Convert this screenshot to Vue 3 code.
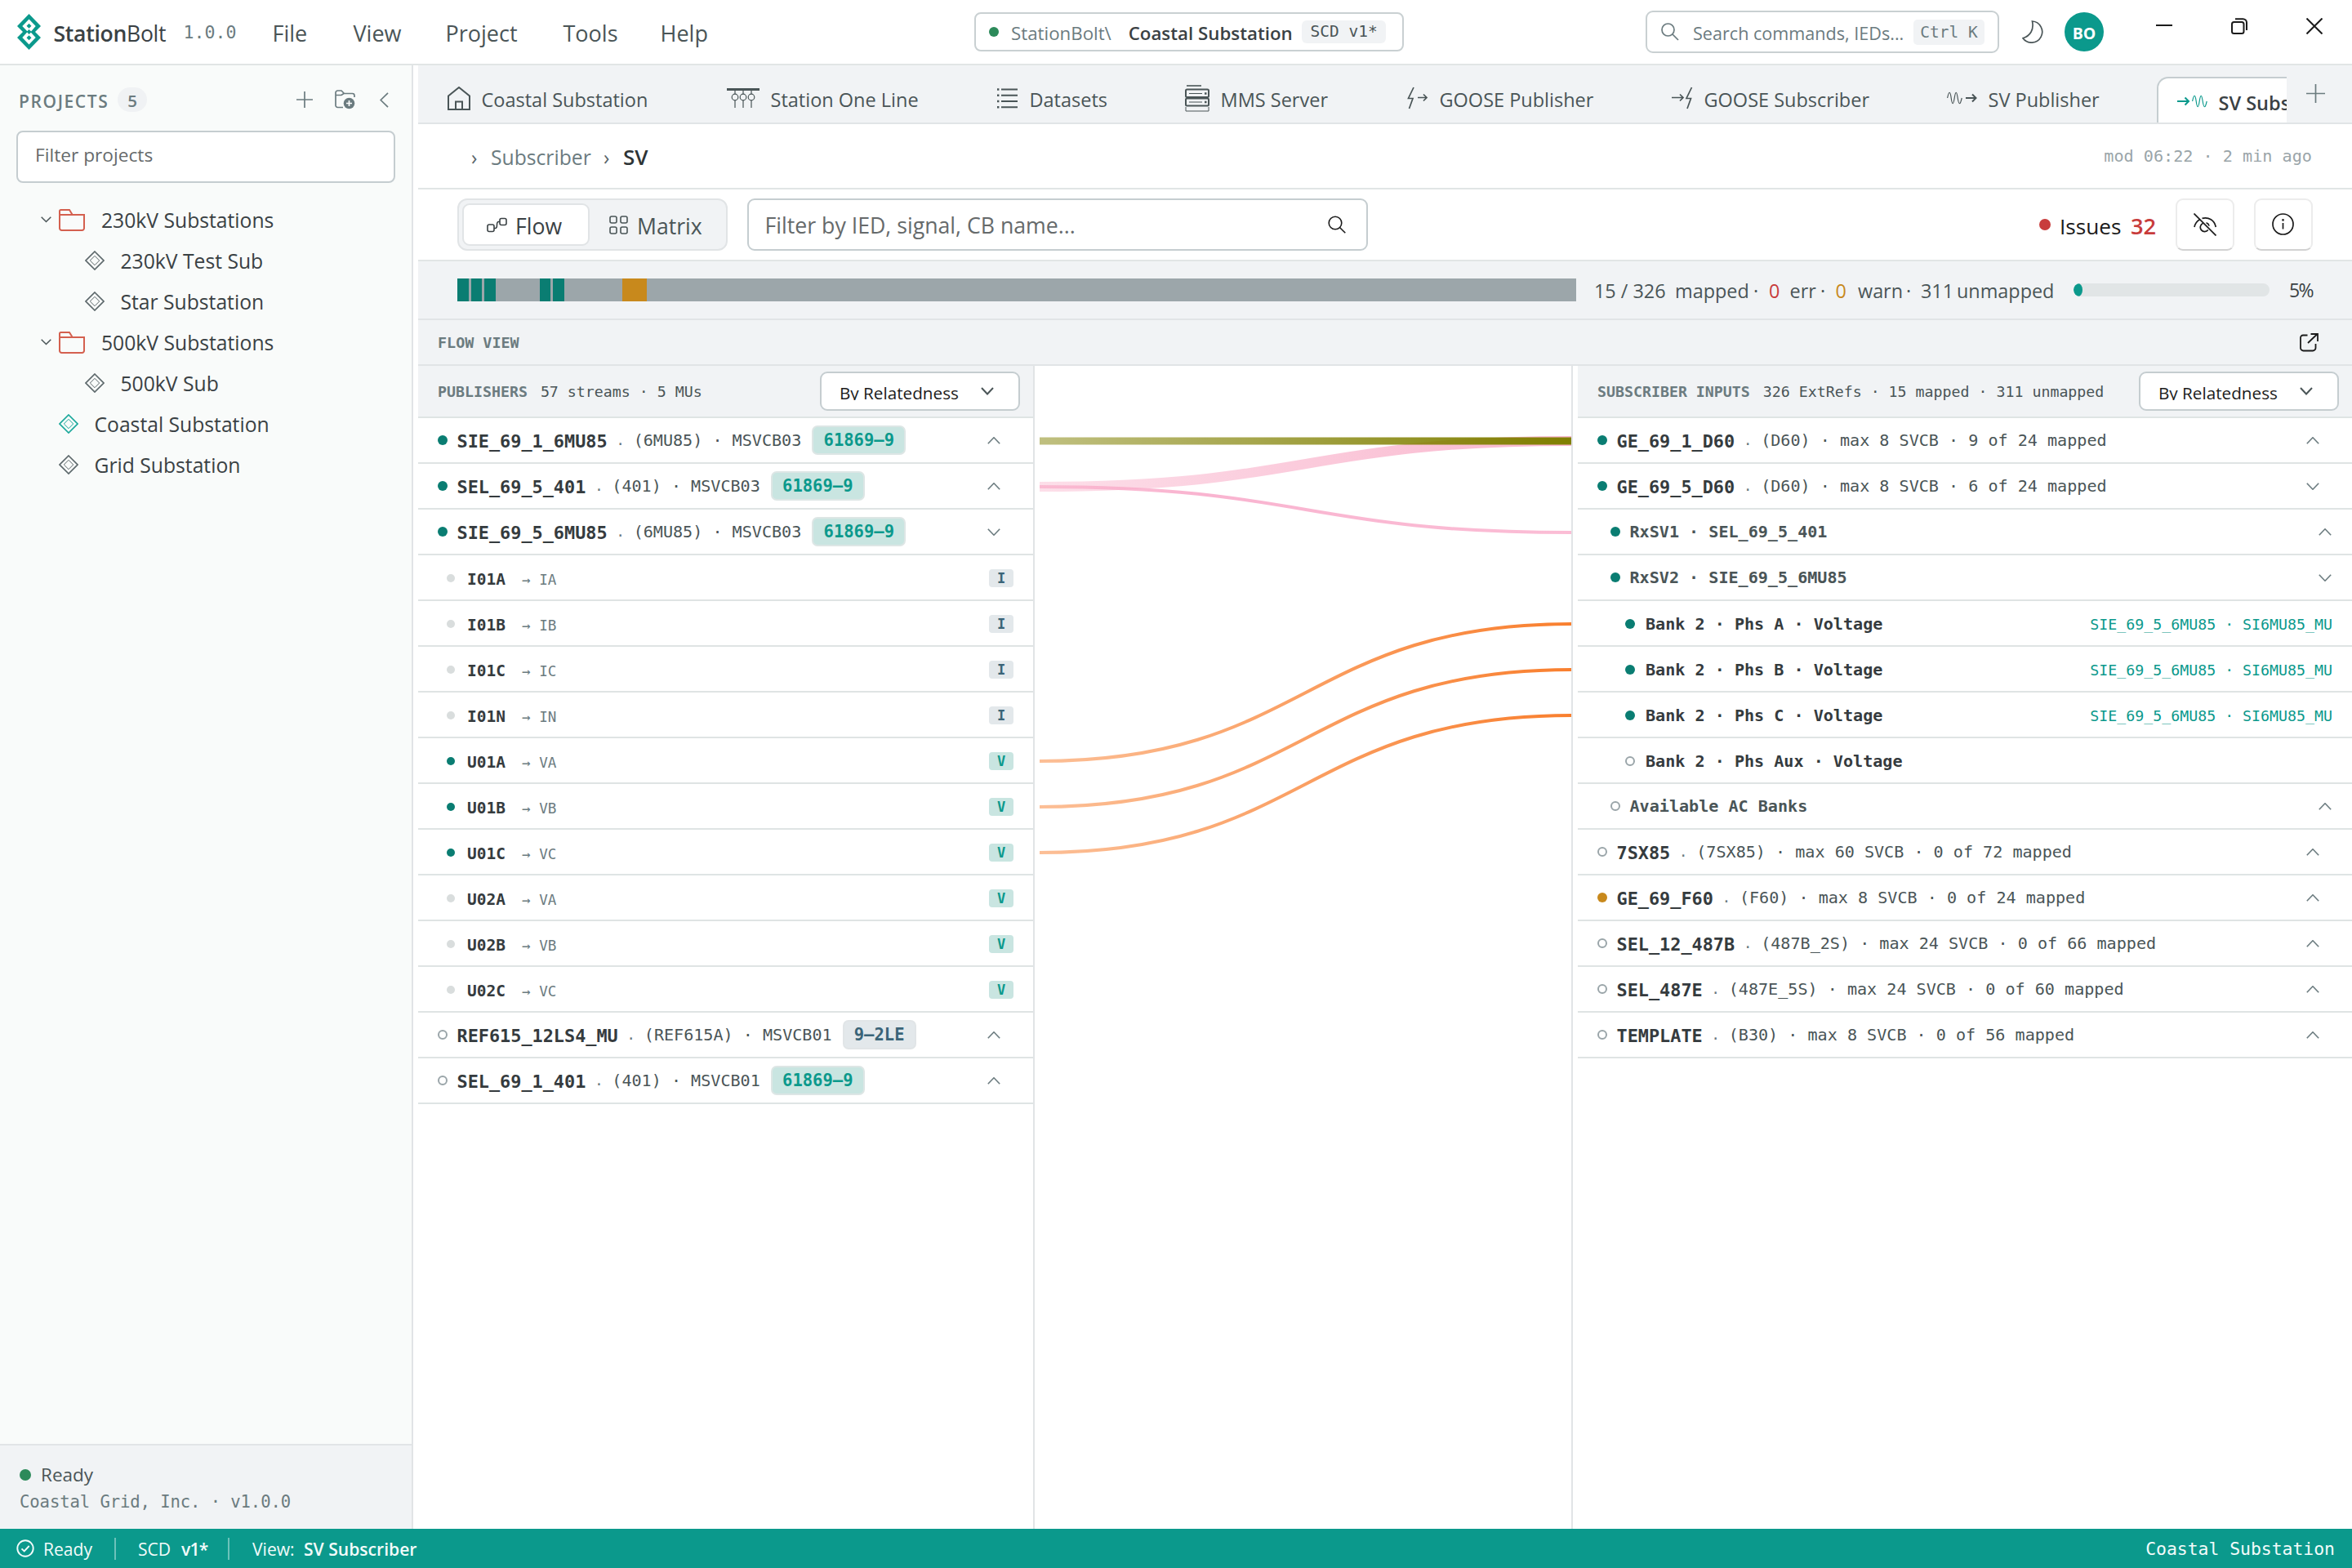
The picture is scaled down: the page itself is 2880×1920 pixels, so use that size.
<script setup>
const menus = ['File', 'View', 'Project', 'Tools', 'Help']

const tabs = [
  { icon: 'home', label: 'Coastal Substation' },
  { icon: 'oneline', label: 'Station One Line' },
  { icon: 'list', label: 'Datasets' },
  { icon: 'server', label: 'MMS Server' },
  { icon: 'goosePub', label: 'GOOSE Publisher' },
  { icon: 'gooseSub', label: 'GOOSE Subscriber' },
  { icon: 'svPub', label: 'SV Publisher' },
]

const tree = [
  { kind: 'folder', label: '230kV Substations' },
  { kind: 'child', label: '230kV Test Sub' },
  { kind: 'child', label: 'Star Substation' },
  { kind: 'folder', label: '500kV Substations' },
  { kind: 'child', label: '500kV Sub' },
  { kind: 'root', label: 'Coastal Substation', active: true },
  { kind: 'root', label: 'Grid Substation' },
]

const stats = [
  { text: '15 / 326' },
  { text: 'mapped' },
  { text: '·' },
  { text: '0', tone: 'err' },
  { text: 'err' },
  { text: '·' },
  { text: '0', tone: 'warn' },
  { text: 'warn' },
  { text: '·' },
  { text: '311' },
  { text: 'unmapped' },
]

const segments = [
  { x: 0, w: 14, tone: 'ok' },
  { x: 17, w: 13, tone: 'ok' },
  { x: 33, w: 14, tone: 'ok' },
  { x: 101, w: 13, tone: 'ok' },
  { x: 117, w: 14, tone: 'ok' },
  { x: 202, w: 30, tone: 'warn' },
]

const publishers = [
  { name: 'SIE_69_1_6MU85', meta: '(6MU85) · MSVCB03', std: '61869–9', dot: 'on' },
  { name: 'SEL_69_5_401', meta: '(401) · MSVCB03', std: '61869–9', dot: 'on' },
  {
    name: 'SIE_69_5_6MU85', meta: '(6MU85) · MSVCB03', std: '61869–9', dot: 'on', open: true,
    signals: [
      { name: 'I01A', to: 'IA', type: 'I' },
      { name: 'I01B', to: 'IB', type: 'I' },
      { name: 'I01C', to: 'IC', type: 'I' },
      { name: 'I01N', to: 'IN', type: 'I' },
      { name: 'U01A', to: 'VA', type: 'V', on: true },
      { name: 'U01B', to: 'VB', type: 'V', on: true },
      { name: 'U01C', to: 'VC', type: 'V', on: true },
      { name: 'U02A', to: 'VA', type: 'V' },
      { name: 'U02B', to: 'VB', type: 'V' },
      { name: 'U02C', to: 'VC', type: 'V' },
    ],
  },
  { name: 'REF615_12LS4_MU', meta: '(REF615A) · MSVCB01', std: '9–2LE', dot: 'off', legacy: true },
  { name: 'SEL_69_1_401', meta: '(401) · MSVCB01', std: '61869–9', dot: 'off' },
]

const source = 'SIE_69_5_6MU85 · SI6MU85_MU'
const subscribers = [
  { level: 0, name: 'GE_69_1_D60', meta: '(D60) · max 8 SVCB · 9 of 24 mapped', dot: 'on' },
  { level: 0, name: 'GE_69_5_D60', meta: '(D60) · max 8 SVCB · 6 of 24 mapped', dot: 'on', open: true },
  { level: 1, name: 'RxSV1 · SEL_69_5_401', dot: 'on' },
  { level: 1, name: 'RxSV2 · SIE_69_5_6MU85', dot: 'on', open: true },
  { level: 2, name: 'Bank 2 · Phs A · Voltage', dot: 'on', source },
  { level: 2, name: 'Bank 2 · Phs B · Voltage', dot: 'on', source },
  { level: 2, name: 'Bank 2 · Phs C · Voltage', dot: 'on', source },
  { level: 2, name: 'Bank 2 · Phs Aux · Voltage', dot: 'off' },
  { level: 1, name: 'Available AC Banks', dot: 'off' },
  { level: 0, name: '7SX85', meta: '(7SX85) · max 60 SVCB · 0 of 72 mapped', dot: 'off' },
  { level: 0, name: 'GE_69_F60', meta: '(F60) · max 8 SVCB · 0 of 24 mapped', dot: 'warn' },
  { level: 0, name: 'SEL_12_487B', meta: '(487B_2S) · max 24 SVCB · 0 of 66 mapped', dot: 'off' },
  { level: 0, name: 'SEL_487E', meta: '(487E_5S) · max 24 SVCB · 0 of 60 mapped', dot: 'off' },
  { level: 0, name: 'TEMPLATE', meta: '(B30) · max 8 SVCB · 0 of 56 mapped', dot: 'off' },
]

// Link endpoints are row indexes on either side; rows are 56px high below the 64px column header.
const rowY = (row) => 64 + row * 56 + 28
const curve = (a, b) => `M0 ${rowY(a)}C326 ${rowY(a)} 326 ${rowY(b)} 652 ${rowY(b)}`
const links = [
  { d: curve(1, 0), stroke: 'url(#pinkWide)', width: 12 },
  { d: curve(1, 2), stroke: 'url(#pinkThin)', width: 4 },
  { d: curve(7, 4), stroke: 'url(#orange)', width: 4 },
  { d: curve(8, 5), stroke: 'url(#orange)', width: 4 },
  { d: curve(9, 6), stroke: 'url(#orange)', width: 4 },
]
</script>

<template>
  <div class="app">
    <header class="titlebar">
      <svg class="logo" width="29" height="44" viewBox="0 0 29 44">
        <path fill="#0b998c" fill-rule="evenodd" d="M14.5 0L29 15l-7 7 7 7-14.500 15L0 29l7-7-7-7zM14.500 6.500L6.300 15l6 6.200 2.200-2.200 2.600 2.600 5.600-6.600zM16.900 22.800L14.500 25l-2.300-2.500L6.300 29l8.200 8.500L22.700 29z" />
        <path fill="#0b998c" d="M14.500 11.800l3 3-3 3-3-3zM14.500 26.200l3 3-3 3-3-3z" />
      </svg>
      <div class="brand"><b>Station</b>Bolt</div>
      <div class="version">1.0.0</div>
      <nav class="menu"><span v-for="m in menus" :key="m">{{ m }}</span></nav>
      <div class="context">
        <i class="dot ready"></i>
        <span class="path">StationBolt\</span>
        <b>Coastal Substation</b>
        <span class="chip">SCD v1*</span>
      </div>
      <div class="search">
        <svg width="22" height="22" viewBox="0 0 22 22" class="line"><circle cx="8.500" cy="8.500" r="7.500" /><path d="M14 14l7 7" /></svg>
        <span>Search commands, IEDs...</span>
        <kbd>Ctrl K</kbd>
      </div>
      <svg class="moon line" width="27" height="28" viewBox="0 0 27 28"><path d="M12.500 1A13.100 13.100 0 1 1 1 21.800C10 19 14.800 11.500 12.500 1z" /></svg>
      <div class="avatar">BO</div>
      <div class="window">
        <svg width="20" height="20" viewBox="0 0 20 20"><path d="M0 9h20" /></svg>
        <svg width="20" height="20" viewBox="0 0 20 20"><rect x="1" y="5" width="14.500" height="14" rx="2.500" /><path d="M5 1.200h9.500a4.500 4.500 0 0 1 4.500 4.500V15" /></svg>
        <svg width="20" height="20" viewBox="0 0 20 20"><path d="M.5.5l19 19M19.500.5l-19 19" /></svg>
      </div>
    </header>

    <div class="body">
      <aside class="sidebar">
        <div class="side-head">
          <span class="side-title">PROJECTS</span>
          <span class="count">5</span>
          <svg class="line s-plus" width="20" height="20" viewBox="0 0 20 20"><path d="M10 0v20M0 10h20" /></svg>
          <svg class="line s-add" width="25" height="24" viewBox="0 0 25 24">
            <path d="M10 21.500H3.500a2.500 2.500 0 0 1-2.500-2.500V3.500A2.500 2.500 0 0 1 3.500 1H8l3.500 3.500h10A2.500 2.500 0 0 1 24 7v2M1 6.500h7l3-2" />
            <circle cx="17.500" cy="16.500" r="6.800" fill="#6b7b7f" stroke="none" />
            <path d="M17.500 13v7M14 16.500h7" stroke="#fff" />
          </svg>
          <svg class="line s-back" width="11" height="19" viewBox="0 0 11 19"><path d="M10 .8L1.200 9.500 10 18.200" /></svg>
        </div>
        <div class="side-filter">Filter projects</div>
        <div v-for="n in tree" :key="n.label" class="node" :class="[n.kind, { active: n.active }]">
          <template v-if="n.kind === 'folder'">
            <svg class="caret" width="13" height="8" viewBox="0 0 13 8"><path d="M.7.7l5.800 5.800L12.300.7" /></svg>
            <svg class="folder-icon" width="32" height="27" viewBox="0 0 32 27"><path d="M1 7.500V2.500A1.500 1.500 0 0 1 2.500 1H13l4 6.500M1 7h30v16.500a2.500 2.500 0 0 1-2.500 2.500h-25A2.500 2.500 0 0 1 1 23.500z" /></svg>
          </template>
          <svg v-else class="gem" width="24" height="24" viewBox="0 0 24 24">
            <path d="M12 1l11 11-11 11L1 12z" stroke-width="1.700" /><path d="M12 6.300l5.700 5.700-5.700 5.700L6.300 12z" stroke-width="1" />
          </svg>
          <span>{{ n.label }}</span>
        </div>
        <div class="side-foot">
          <div class="state"><i class="dot ready"></i>Ready</div>
          <div class="org">Coastal Grid, Inc. · v1.0.0</div>
        </div>
      </aside>

      <main class="main">
        <div class="tabbar">
          <div class="tabs">
            <div v-for="t in tabs" :key="t.label" class="tab">
              <svg v-if="t.icon === 'home'" class="ticon" width="28" height="29" viewBox="0 0 28 29"><path d="M1 11.500L14 1l13 10.500V28H1zM10 28V18.500h8V28" /></svg>
              <svg v-else-if="t.icon === 'oneline'" class="ticon" width="40" height="24" viewBox="0 0 40 24">
                <path d="M0 1.500h40" stroke-width="2.800" /><path d="M10 2v5M20 2v5M30 2v5M10 15v9M20 15v9M30 15v9" stroke-width="1.200" />
                <circle cx="10" cy="11" r="3.800" stroke-width="1.200" /><circle cx="20" cy="11" r="3.800" stroke-width="1.200" /><circle cx="30" cy="11" r="3.800" stroke-width="1.200" />
              </svg>
              <svg v-else-if="t.icon === 'list'" class="ticon" width="27" height="25" viewBox="0 0 27 25"><path d="M6 1.500h20M6 8.800h20M6 16h20M6 23.300h20" /><path d="M1 1.500h2.400M1 8.800h2.400M1 16h2.400M1 23.300h2.400" stroke-width="2.400" /></svg>
              <svg v-else-if="t.icon === 'server'" class="ticon" width="30" height="34" viewBox="0 0 30 34">
                <path d="M2 2h18" stroke-width="1.600" /><rect x="1" y="6.500" width="28" height="9.500" rx="1.500" /><rect x="1" y="17.500" width="28" height="9" rx="1.500" /><path d="M1 28v5h28v-5M5 11.500h16M5 22h16" stroke-width="1" /><path d="M24 11.500h2.500M24 22h2.500" stroke-width="2.400" />
              </svg>
              <svg v-else-if="t.icon === 'goosePub'" class="ticon" width="26" height="28" viewBox="0 0 26 28"><path d="M8 1L1.500 14.500H7L2.500 27M13 13.500h11M20 9.500l4 4-4 4" stroke-width="1.700" /></svg>
              <svg v-else-if="t.icon === 'gooseSub'" class="ticon" width="26" height="28" viewBox="0 0 26 28"><path d="M24.500 1L18 14.500h5.500L19 27M0 13.500h14M10 9.500l4 4-4 4" stroke-width="1.700" /></svg>
              <svg v-else class="ticon" width="37" height="16" viewBox="0 0 37 16"><path d="M.6 8C2.500-1 4-1 5.200 8s2.600 9 4 0 2.600-9 4 0 3 9 5 0" stroke-width="1.200" /><path d="M23 8h12M31 3.500L35.500 8 31 12.500" stroke-width="2" /></svg>
              <span>{{ t.label }}</span>
            </div>
            <div class="tab current">
              <svg class="ticon" width="37" height="16" viewBox="0 0 37 16"><path d="M18.600 8c1.900-9 3.400-9 4.600 0s2.600 9 4 0 2.600-9 4 0 3 9 5 0" stroke-width="1.200" /><path d="M0 8h14M9.500 3.500L14 8l-4.500 4.500" stroke-width="2" /></svg>
              <span>SV Subscriber</span>
            </div>
          </div>
          <svg class="line newtab" width="23" height="23" viewBox="0 0 23 23"><path d="M11.500 0v23M0 11.500h23" /></svg>
        </div>

        <div class="crumbs">
          <span class="sep">›</span><span>Subscriber</span><span class="sep">›</span><b>SV</b>
          <span class="mod">mod 06:22 · 2 min ago</span>
        </div>

        <div class="toolbar">
          <div class="segmented">
            <div class="seg on">
              <svg width="25" height="19" viewBox="0 0 25 19"><rect x="1" y="9" width="8" height="8.500" rx="2" /><rect x="16" y="1.500" width="8" height="8" rx="2" /><path d="M9 13.500h1.500c2 0 2-1.500 2-4s0-4 2-4H16" /></svg>
              <span>Flow</span>
            </div>
            <div class="seg">
              <svg width="23" height="23" viewBox="0 0 23 23"><rect x="1" y="1" width="8" height="8" rx="2" /><rect x="14" y="1" width="8" height="8" rx="2" /><rect x="1" y="14" width="8" height="8" rx="2" /><rect x="14" y="14" width="8" height="8" rx="2" /></svg>
              <span>Matrix</span>
            </div>
          </div>
          <div class="filter">
            <span>Filter by IED, signal, CB name...</span>
            <svg width="22" height="22" viewBox="0 0 22 22"><circle cx="9" cy="9" r="7.800" /><path d="M14.500 14.500L21.300 21.300" /></svg>
          </div>
          <div class="issues"><i class="dot"></i><span>Issues</span><b>32</b></div>
          <div class="btn">
            <svg width="28" height="28" viewBox="0 0 28 28"><path d="M.5.5l27 27M1 17C1.800 13 4 10 7.300 8M10.500 6.400C18.500 4.500 25.500 8.500 27.300 17M17.800 20.500A5.300 5.300 0 1 1 11.300 12.500M15.500 11.800a5.300 5.300 0 0 1 3.600 3.800" /></svg>
          </div>
          <div class="btn">
            <svg width="27" height="27" viewBox="0 0 27 27"><circle cx="13.500" cy="13.500" r="12.500" /><path d="M13.500 12v7.500" /><path d="M13.500 7.200v2.400" stroke-width="2.400" /></svg>
          </div>
        </div>

        <div class="coverage">
          <div class="strip">
            <i v-for="s in segments" :key="s.x" :class="s.tone" :style="{ left: s.x + 'px', width: s.w + 'px' }"></i>
          </div>
          <div class="stats"><span v-for="(s, i) in stats" :key="i" :class="s.tone">{{ s.text }}</span></div>
          <div class="meter"><i></i></div>
          <span class="pct">5%</span>
        </div>

        <div class="flowhead">
          <span>FLOW VIEW</span>
          <svg width="23" height="23" viewBox="0 0 23 23"><path d="M9.500 2.500H4A3 3 0 0 0 1 5.500V18a3.500 3.500 0 0 0 3.500 3.500H16a3.500 3.500 0 0 0 3.500-3.500v-5M10 12L21.500 1M13.500 1H22v9" /></svg>
        </div>

        <div class="flow">
          <section class="col pubs">
            <div class="colhead">
              <b>PUBLISHERS</b><span>57 streams · 5 MUs</span>
              <div class="select"><span>By Relatedness</span><svg width="16" height="10" viewBox="0 0 16 10"><path d="M1 1l7 7.500L15 1" /></svg></div>
            </div>
            <template v-for="p in publishers" :key="p.name">
              <div class="row">
                <i class="dot" :class="p.dot"></i><b class="name">{{ p.name }}</b><span class="mid">·</span><span class="meta">{{ p.meta }}</span>
                <span class="std" :class="{ legacy: p.legacy }">{{ p.std }}</span>
                <svg class="chev" width="16" height="9" viewBox="0 0 16 9"><path :d="p.open ? 'M.8.8L8 8.200 15.200.8' : 'M.8 8.200L8 .8l7.200 7.400'" /></svg>
              </div>
              <div v-for="s in p.signals" :key="s.name" class="row signal">
                <i class="dot" :class="s.on ? 'on' : 'idle'"></i><b>{{ s.name }}</b><span class="to">→ {{ s.to }}</span>
                <span class="type" :class="s.type">{{ s.type }}</span>
              </div>
            </template>
          </section>

          <svg class="links" width="651" height="1424" viewBox="0 0 651 1424">
            <defs>
              <linearGradient id="olive" gradientUnits="userSpaceOnUse" x1="0" y1="0" x2="652" y2="0"><stop offset="0" stop-color="#808000" stop-opacity=".5" /><stop offset="1" stop-color="#808000" /></linearGradient>
              <linearGradient id="pinkWide" gradientUnits="userSpaceOnUse" x1="0" y1="0" x2="652" y2="0"><stop offset="0" stop-color="#f8a5c2" stop-opacity=".36" /><stop offset="1" stop-color="#f8a5c2" stop-opacity=".8" /></linearGradient>
              <linearGradient id="pinkThin" gradientUnits="userSpaceOnUse" x1="0" y1="0" x2="652" y2="0"><stop offset="0" stop-color="#f99fc0" stop-opacity=".55" /><stop offset=".3" stop-color="#f9b4d0" /><stop offset="1" stop-color="#fbbdd5" /></linearGradient>
              <linearGradient id="orange" gradientUnits="userSpaceOnUse" x1="0" y1="0" x2="652" y2="0"><stop offset="0" stop-color="#f97f2e" stop-opacity=".5" /><stop offset="1" stop-color="#f97f2e" /></linearGradient>
            </defs>
            <path v-for="l in links" :key="l.d" :d="l.d" :stroke="l.stroke" :stroke-width="l.width" fill="none" />
            <rect x="0" y="87.500" width="652" height="9" fill="url(#olive)" stroke="none" />
          </svg>

          <section class="col subs">
            <div class="colhead">
              <b>SUBSCRIBER INPUTS</b><span>326 ExtRefs · 15 mapped · 311 unmapped</span>
              <div class="select"><span>By Relatedness</span><svg width="16" height="10" viewBox="0 0 16 10"><path d="M1 1l7 7.500L15 1" /></svg></div>
            </div>
            <div v-for="s in subscribers" :key="s.name" class="row" :class="'level' + s.level">
              <i class="dot" :class="s.dot"></i><b class="name">{{ s.name }}</b>
              <template v-if="s.meta"><span class="mid">·</span><span class="meta">{{ s.meta }}</span></template>
              <span v-if="s.source" class="source">{{ s.source }}</span>
              <svg v-if="s.level < 2" class="chev" width="16" height="9" viewBox="0 0 16 9"><path :d="s.open ? 'M.8.8L8 8.200 15.200.8' : 'M.8 8.200L8 .8l7.200 7.400'" /></svg>
            </div>
          </section>
        </div>
      </main>
    </div>

    <footer class="statusbar">
      <svg width="22" height="22" viewBox="0 0 22 22"><circle cx="11" cy="11" r="9.700" /><path d="M6.500 11.300l3.200 3.200 6-6.500" /></svg>
      <span class="st-ready">Ready</span>
      <i></i>
      <span class="st-scd">SCD</span><b class="st-ver">v1*</b>
      <i></i>
      <span class="st-view">View:</span><b>SV Subscriber</b>
      <span class="site">Coastal Substation</span>
    </footer>
  </div>
</template>

<style>
body { background: #fff; }
</style>

<style scoped>
* { box-sizing: border-box; }
.app {
  width: 2880px; height: 1920px; overflow: hidden; display: flex; flex-direction: column;
  font-family: "Open Sans", "Noto Sans", sans-serif; color: #3a4144; background: #fff; white-space: pre;
}
.app svg { flex: none; fill: none; stroke: currentColor; stroke-width: 2; }
.app .line { stroke-width: 1.700; }
b { font-weight: 600; }
.dot { flex: none; width: 12px; height: 12px; border-radius: 50%; background: #0a7d72; }
.dot.ready { background: #2c8a5a; }
.dot.idle { background: #d9dddd; }
.dot.warn { background: #c8891c; }
.dot.off { background: #fff; border: 2px solid #9aa5a9; }

/* Title bar */
.titlebar { height: 80px; flex: none; display: flex; align-items: center; border-bottom: 2px solid #e1e5e5; position: relative; }
.titlebar .logo { margin-left: 20.500px; stroke: none; }
.brand { width: 158px; margin-left: 16px; padding-top: 3px; font-size: 26.600px; letter-spacing: -.3px; color: #3a4144; }
.version { width: 109px; margin-left: 1px; font: 21.600px "DejaVu Sans Mono", monospace; color: #6b7b7f; }
.menu { display: grid; grid-template-columns: 99px 113px 144px 119px 140px; padding-top: 3px; font-size: 27px; color: #4a5557; }
.context { position: absolute; left: 1193px; top: 15px; width: 526px; height: 48px; border: 2px solid #c9d0d2; border-radius: 8px; display: flex; align-items: center; padding: 0 20px 0 16px; font-size: 22.300px; }
.context .path { width: 144px; margin-left: 15px; padding-top: 3px; color: #6b7b7f; }
.context b { width: 213px; padding-top: 3px; }
.context .chip { height: 28px; width: 103px; border-radius: 6px; background: #f1f3f5; font: 19.500px/28px "DejaVu Sans Mono", monospace; text-align: center; color: #4a5557; }
.search { position: absolute; left: 2015px; top: 13px; width: 433px; height: 52px; border: 2px solid #c9d0d2; border-radius: 9px; display: flex; align-items: center; padding: 0 15px 0 17px; color: #6b7b7f; font-size: 21.600px; }
.search span { padding-top: 3px; width: 270px; margin-left: 17px; }
.search kbd { width: 87px; height: 31px; background: #f1f3f5; border-radius: 5px; text-align: center; font: 19.500px/31px "DejaVu Sans Mono", monospace; color: #6b7b7f; }
.moon { position: absolute; left: 2476px; top: 25px; color: #4a5557; }
.avatar { position: absolute; left: 2528px; top: 15px; width: 48px; height: 48px; border-radius: 50%; background: #0b998c; color: #fff; font: 700 19.500px/51px "Open Sans", sans-serif; text-align: center; }
.window { position: absolute; left: 2640px; top: 22px; display: flex; gap: 72px; color: #1b1b1b; }

/* Sidebar */
.body { flex: 1; min-height: 0; display: flex; }
.sidebar { width: 506px; flex: none; border-right: 2px solid #e1e4e6; background: #f9fbfa; display: flex; flex-direction: column; }
.side-head { height: 80px; display: flex; align-items: center; padding: 4px 0 0 23px; color: #6b7b7f; }
.side-title { width: 121px; font-size: 21px; font-weight: 600; letter-spacing: 1.600px; padding-top: 3px; }
.count { width: 36px; height: 30px; border-radius: 18px; background: #f0f2f4; font-size: 20.500px; font-weight: 600; line-height: 32px; text-align: center; }
.s-plus { margin-left: 183px; }
.s-add { margin-left: 27px; }
.s-back { margin-left: 30px; }
.side-filter { width: 464px; height: 64px; margin: 0 0 20px 20px; border: 2px solid #c5cdd0; border-radius: 8px; background: #fff; padding-left: 21px; font-size: 22.700px; line-height: 55px; color: #666a6b; }
.node { height: 50px; display: flex; align-items: center; font-size: 24.700px; }
.caret { margin-left: 49.500px; color: #4a5557; stroke-width: 1.500 !important; }
.folder-icon { margin-left: 9.500px; color: #d4604f; }
.folder span { margin-left: 20px; }
.child .gem { margin-left: 104px; }
.root .gem { margin-left: 72px; }
.gem { color: #5d686b; }
.active .gem { color: #1ba89b; }
.child span, .root span { margin-left: 19.500px; }
.side-foot { margin-top: auto; height: 104px; border-top: 2px solid #e1e4e6; background: #f1f3f5; padding: 19px 24px; }
.state { display: flex; align-items: center; font-size: 22.500px; line-height: 34px; color: #4a5557; }
.state .dot { width: 14px; height: 14px; margin-right: 12px; }
.org { font: 20.600px/33px "DejaVu Sans Mono", monospace; color: #6b7b7f; letter-spacing: -.1px; }

/* Tabs */
.main { flex: 1; min-width: 0; margin-left: 6px; display: flex; flex-direction: column; }
.tabbar { height: 72px; flex: none; background: #f1f3f5; border-bottom: 2px solid #e1e4e6; display: flex; }
.tabs { width: 2288px; overflow: hidden; display: grid; grid-template-columns: 342px 330px 231px 272px 324px 337px 258px 300px; padding-left: 36px; flex: none; }
.tab { display: flex; align-items: center; gap: 13.500px; padding-top: 10px; font-size: 23.500px; font-weight: 500; color: #4a5557; }
.tab span { padding-top: 3px; }
.tab.current { margin: 14px 0 -2px -1px; padding: 0 0 0 23px; border: 2px solid #c5cdd0; border-bottom: 0; border-radius: 14px 14px 0 0; background: #fff; color: #3a4144; font-weight: 600; }
.tab.current .ticon { color: #0b998c; }
.newtab { margin: 23px 0 0 24px; color: #6b7b7f; }

/* Breadcrumb */
.crumbs { height: 80px; flex: none; border-bottom: 2px solid #e1e5e5; display: flex; align-items: center; padding: 2px 49px 0 65px; font-size: 24.700px; color: #6b7b7f; }
.crumbs .sep { width: 24px; color: #5a6669; }
.crumbs .sep + span { width: 138px; }
.crumbs b { font-size: 26px; color: #2e3436; }
.mod { margin-left: auto; font: 20.150px "DejaVu Sans Mono", monospace; color: #9aa5a9; padding-bottom: 2px; }

/* Toolbar */
.toolbar { height: 88px; flex: none; border-bottom: 2px solid #e1e5e5; display: flex; align-items: center; padding-left: 48px; color: #1b1b1b; }
.segmented { width: 331px; height: 64px; border: 2px solid #e1e4e6; border-radius: 12px; background: #f1f3f5; display: flex; align-items: center; padding: 0 4px; }
.seg { display: flex; align-items: center; height: 52px; font-size: 26.600px; color: #4a5557; padding-left: 24px; }
.seg span { padding-top: 3px; margin-left: 11px; }
.seg.on { width: 156px; background: #fff; border: 2px solid #e1e4e6; border-radius: 9px; padding-left: 28px; color: #3a4144; }
.seg.on span { margin-left: 10px; }
.seg svg { stroke-width: 1.600; }
.filter { width: 760px; height: 64px; margin-left: 24px; border: 2px solid #c5cdd0; border-radius: 9px; display: flex; align-items: center; justify-content: space-between; padding: 0 25px 0 19.500px; font-size: 26.700px; color: #666a6b; }
.filter svg { color: #1b1b1b; stroke-width: 1.600; }
.issues { margin-left: auto; display: flex; align-items: center; font-size: 26.200px; }
.issues .dot { width: 14px; height: 14px; background: #c83c3c; margin-right: 11px; }
.issues span { width: 87px; padding-top: 3px; }
.issues b { width: 55px; padding-top: 3px; font-size: 27.300px; color: #c83c3c; }
.btn { width: 72px; height: 64px; border: 2px solid #ececec; border-bottom-color: #d2d2d2; border-radius: 9px; display: flex; align-items: center; justify-content: center; }
.btn svg { stroke-width: 1.700; }
.btn + .btn { margin: 0 48px 0 24px; }
.btn + .btn svg { margin: 0 2px 2px 0; }

/* Coverage */
.coverage { height: 72px; flex: none; background: #f1f3f5; border-bottom: 2px solid #e1e4e6; display: flex; align-items: center; padding-left: 48px; }
.strip { position: relative; width: 1370px; height: 28px; background: #9ca6aa; flex: none; }
.strip i { position: absolute; top: 0; bottom: 0; background: #0a7d72; }
.strip .warn { background: #c8891c; }
.stats { display: grid; grid-template-columns: 99px 96px 19px 25.500px 37.500px 18.500px 27.500px 59px 18px 44px 143px; margin-left: 22px; padding-top: 2px; font-size: 23.400px; color: #4a5557; }
.stats .err { color: #c83c3c; }
.stats .warn { color: #c8891c; }
.meter { width: 240px; height: 16px; border-radius: 8px; background: #e1e5e6; overflow: hidden; }
.meter i { display: block; width: 11px; height: 16px; border-radius: 50%; background: #0b998c; }
.pct { margin-left: 24px; font-size: 23px; font-weight: 500; letter-spacing: -1.700px; }

.flowhead { height: 56px; flex: none; background: #f1f3f5; border-bottom: 2px solid #e1e4e6; display: flex; align-items: center; justify-content: space-between; padding: 0 41px 0 24px; font: 700 18.400px "DejaVu Sans Mono", monospace; color: #6b7b7f; }
.flowhead svg { color: #1b1b1b; stroke-width: 1.800; }

/* Flow columns */
.flow { flex: 1; min-height: 0; display: flex; font-family: "DejaVu Sans Mono", monospace; }
.pubs { width: 755px; border-right: 2px solid #e1e4e6; }
.links { margin-left: 6px; }
.subs { width: 956px; border-left: 2px solid #e1e4e6; padding-left: 6px; }
.col { flex: none; }
.colhead { height: 64px; background: #f1f3f5; border-bottom: 2px solid #dfe4e4; display: flex; align-items: center; padding: 0 16px 0 24px; font-size: 18.250px; color: #4a5557; }
.colhead b { color: #6b7b7f; margin-right: 16px; font-weight: 700; }
.select { margin-left: auto; width: 245px; height: 48px; border: 2px solid #c5cdd0; border-radius: 9px; background: #fff; display: flex; align-items: center; justify-content: space-between; padding: 0 30px 0 22px; font: 20.700px "Open Sans", sans-serif; color: #1b1b1b; }
.select span { height: 22px; line-height: 26px; overflow: hidden; margin-top: 0; }
.select svg { color: #4a5557; }
.row { height: 56px; border-bottom: 2px solid #dfe4e4; display: flex; align-items: center; padding: 0 40px 0 24px; }
.name { margin-left: 11.500px; padding-top: 2px; font-size: 21.850px; font-weight: 700; color: #353b3e; }
.mid { width: 32px; text-align: center; font-size: 18px; padding-top: 8px; color: #6b7b7f; }
.meta { font-size: 20.100px; color: #4a5557; }
.std { height: 36px; width: 115px; margin-left: 13px; border: 2px solid #dde6e5; border-radius: 7px; background: #c9e5e1; color: #0b998c; font-size: 20.500px; font-weight: 700; line-height: 32px; text-align: center; }
.std.legacy { width: 90px; background: #e3e8eb; border-color: #e1e5e7; color: #3a6478; }
.chev { margin-left: auto; color: #6b7b7f; stroke-width: 1.600 !important; }
.signal { padding: 2px 24px 0 35px; }
.signal .dot { width: 10px; height: 10px; margin-right: 15px; }
.signal b { width: 67px; font-size: 19.500px; font-weight: 700; color: #353b3e; padding-top: 2px; }
.signal .to { font-size: 17.600px; color: #6b7b7f; padding-top: 3px; }
.type { margin-left: auto; width: 30px; height: 22px; border-radius: 4px; font-size: 17px; font-weight: 700; line-height: 22px; text-align: center; }
.type.I { background: #e3e8eb; color: #3a6478; }
.type.V { background: #c9e5e1; color: #0b998c; }
.level1 { padding: 0 25px 0 40px; }
.level1 .name { font-size: 20.100px; color: #4a5557; padding-top: 0; }
.level2 { padding: 2px 24px 0 58px; }
.level2 .name { margin-left: 13px; font-size: 20.100px; padding-top: 0; }
.source { margin-left: auto; font-size: 18.250px; color: #0b998c; padding-top: 1px; }

/* Status bar */
.statusbar { height: 48px; flex: none; background: #0b998c; color: #f2fbfa; display: flex; align-items: center; font-size: 21.100px; }
.statusbar svg { margin-left: 19.500px; stroke-width: 1.900; }
.statusbar i { width: 2px; height: 27px; background: rgba(255, 255, 255, .4); }
.st-ready { width: 87px; margin-left: 11.500px; }
.st-scd { width: 53px; margin-left: 27px; }
.st-ver { width: 57px; letter-spacing: -.8px; }
.st-view { width: 63px; margin-left: 28px; }
.site { margin-left: auto; margin-right: 21px; font: 21.400px "DejaVu Sans Mono", monospace; }
</style>
